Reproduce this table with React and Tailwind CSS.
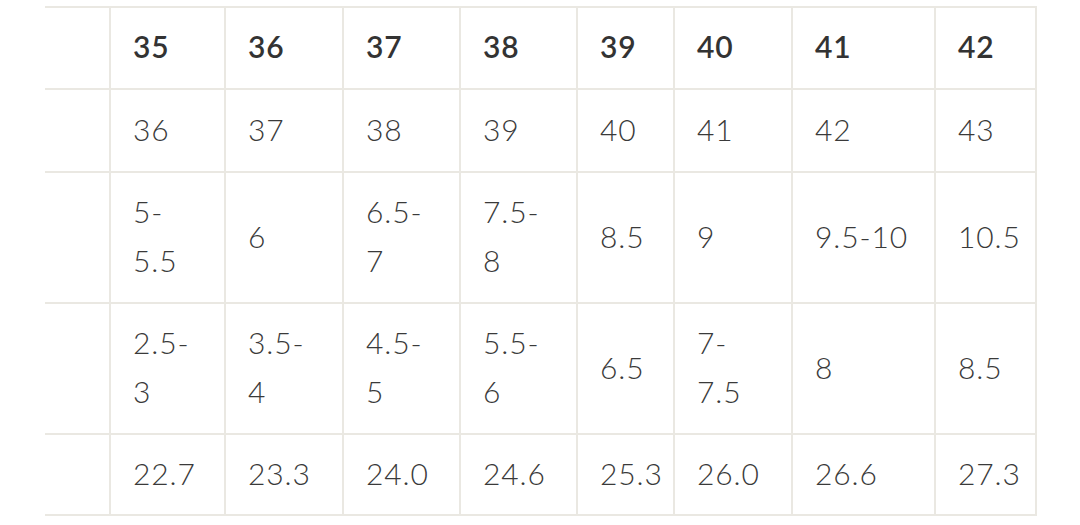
const widths = [64, 115, 118, 117, 117, 97, 118, 143, 103];

const rows = [
    { h: 'h-[82px]', head: true, cells: ['35', '36', '37', '38', '39', '40', '41', '42'] },
    { h: 'h-[83px]', cells: ['36', '37', '38', '39', '40', '41', '42', '43'] },
    { h: 'h-[131px]', cells: [['5-', '5.5'], '6', ['6.5-', '7'], ['7.5-', '8'], '8.5', '9', '9.5-10', '10.5'] },
    { h: 'h-[131px]', cells: [['2.5-', '3'], ['3.5-', '4'], ['4.5-', '5'], ['5.5-', '6'], '6.5', ['7-', '7.5'], '8', '8.5'] },
    { h: 'h-[83px]', cells: ['22.7', '23.3', '24.0', '24.6', '25.3', '26.0', '26.6', '27.3'] },
];

const Cell = ({ value, last, bottom, head }) => (
    <td
        className={`border-t-2 border-l-2 border-[#eae8e2] pl-[22px] pr-2 pb-[3px] align-middle whitespace-nowrap ${last ? 'border-r-2' : ''} ${bottom ? 'border-b-2' : ''} ${head ? 'font-semibold text-[#333]' : 'font-light text-[#3a3a3a]'}`}
    >
        {Array.isArray(value)
            ? value.map((line, i) => <div key={i}>{line}</div>)
            : value}
    </td>
);

export default function App() {
    return (
        <div className="min-h-[525px] w-[1080px] bg-white pt-[6px] pl-[45px]">
            <table
                className="table-fixed border-separate border-spacing-0 text-[30px] leading-[49px] tracking-[0.03em]"
                style={{ width: 992, fontFamily: 'Lato, "Open Sans", sans-serif' }}
            >
                <colgroup>
                    {widths.map((w, i) => <col key={i} style={{ width: w }} />)}
                </colgroup>
                <tbody>
                    {rows.map((row, r) => {
                        const bottom = r === rows.length - 1;
                        return (
                            <tr key={r} className={row.h}>
                                {/* label column is empty and has no left border */}
                                <td className={`border-t-2 border-[#eae8e2] ${bottom ? 'border-b-2' : ''}`} />
                                {row.cells.map((c, i) => (
                                    <Cell
                                        key={i}
                                        value={c}
                                        head={row.head}
                                        last={i === row.cells.length - 1}
                                        bottom={bottom}
                                    />
                                ))}
                            </tr>
                        );
                    })}
                </tbody>
            </table>
        </div>
    );
}
